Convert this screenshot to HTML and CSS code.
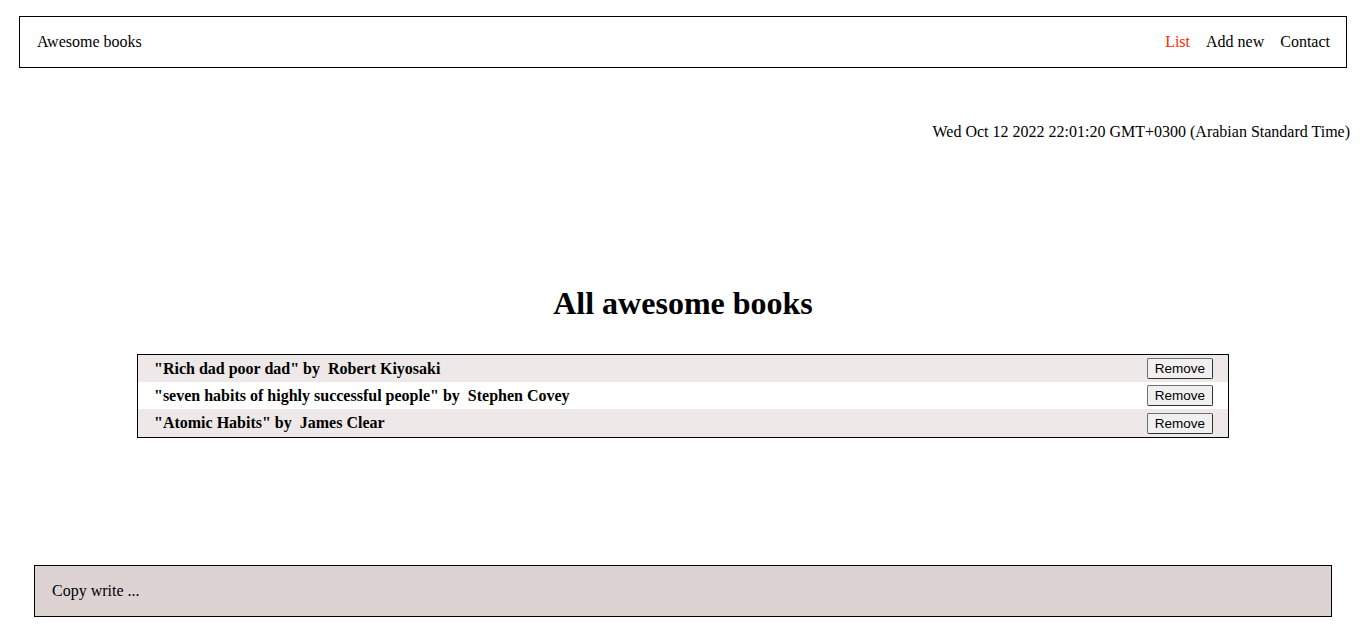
FILE: index.html
```html
<!DOCTYPE html>
<html lang="en">
<head>
<meta charset="utf-8">
<title>Awesome books</title>
<link rel="stylesheet" href="styles.css">
</head>
<body>
<header class="topbar">
  <span class="brand">Awesome books</span>
  <nav class="nav">
    <a class="nav-link active" href="#">List</a>
    <a class="nav-link" href="#">Add new</a>
    <a class="nav-link" href="#">Contact</a>
  </nav>
</header>
<p class="date">Wed Oct 12 2022 22:01:20 GMT+0300 (Arabian Standard Time)</p>
<main class="main">
  <h1 class="title">All awesome books</h1>
  <ul class="books">
    <li class="book odd"><span class="book-text">"Rich dad poor dad" by&nbsp; Robert Kiyosaki</span><button class="remove">Remove</button></li>
    <li class="book"><span class="book-text">"seven habits of highly successful people" by&nbsp; Stephen Covey</span><button class="remove">Remove</button></li>
    <li class="book odd last"><span class="book-text">"Atomic Habits" by&nbsp; James Clear</span><button class="remove">Remove</button></li>
  </ul>
</main>
<footer class="footer">Copy write ...</footer>
</body>
</html>
```
FILE: styles.css
```css
* { box-sizing: border-box; }
html, body { margin: 0; padding: 0; }
body {
  font-family: "Liberation Serif", "Times New Roman", serif;
  font-size: 16px;
  color: #000;
  background: #fff;
  display: flex;
  flex-direction: column;
  height: 625px;
}
.topbar {
  margin: 16px 19px 0 19px;
  height: 52px;
  border: 1px solid #000;
  display: flex;
  align-items: center;
  justify-content: space-between;
  padding: 0 16px 0 17px;
}
.nav { display: flex; gap: 16px; }
.nav-link { color: #000; text-decoration: none; }
.nav-link.active { color: #ff2a00; }
.date {
  margin: 55px 16px 0 0;
  text-align: right;
  line-height: 18px;
}
.main { display: flex; flex-direction: column; align-items: center; }
.title {
  margin: 144px 0 0 0;
  font-size: 32px;
  line-height: 37px;
  font-weight: bold;
}
.books {
  list-style: none;
  margin: 32px 0 0 0;
  padding: 0;
  width: 1092px;
  border: 1px solid #000;
}
.book {
  display: flex;
  align-items: center;
  justify-content: space-between;
  height: 27px;
  padding: 0 15px 0 16px;
  font-weight: bold;
}
.book.last { height: 28px; }
.book.odd { background: #eee8e8; }
.remove {
  font-family: Arial, "Liberation Sans", sans-serif;
  font-size: 13.5px;
  height: 21px;
  width: 66px;
  padding: 0;
  background: #f0f0f0;
  border: 1px solid #707070;
  border-right-color: #333;
  border-bottom-color: #333;
  border-radius: 2px;
  color: #000;
}
.footer {
  margin: auto 34px 8px 34px;
  height: 52px;
  border: 1px solid #000;
  background: #ddd3d3;
  display: flex;
  align-items: center;
  padding-left: 17px;
}
```
